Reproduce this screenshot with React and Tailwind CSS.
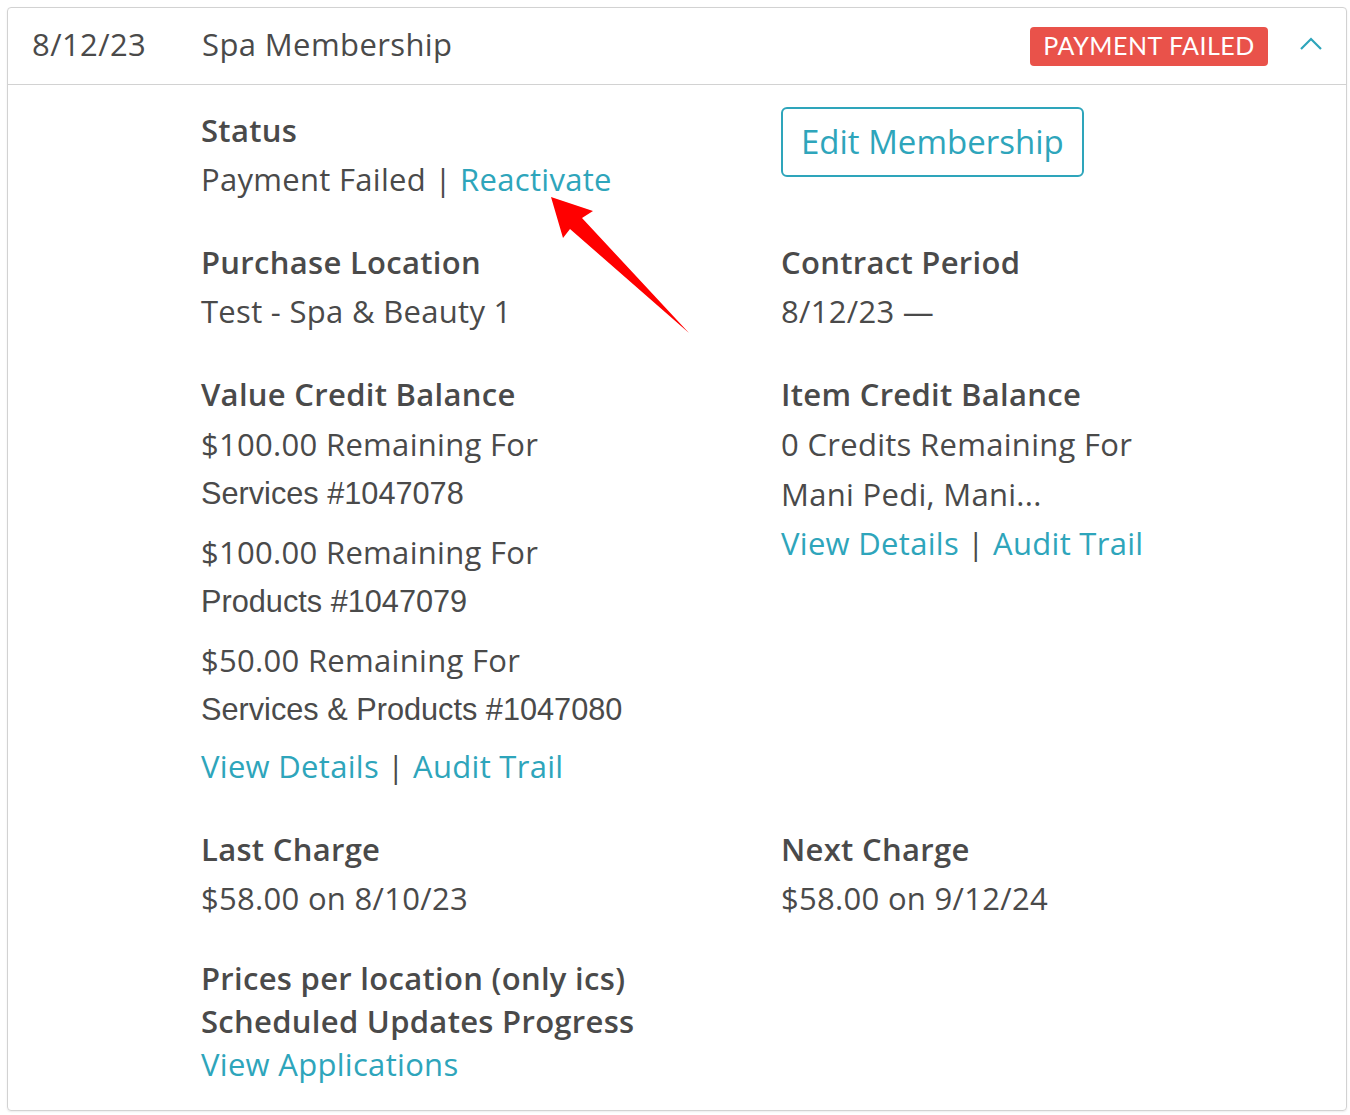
import React from "react";

const teal = "text-[#2ea5bb]";

function Field({ label, children, className = "" }) {
  return (
    <div className={className}>
      <div className="font-semibold leading-[49px]">{label}</div>
      {children}
    </div>
  );
}

function Links() {
  return (
    <div className="leading-[49px]">
      <a className={teal}>View Details</a> | <a className={teal}>Audit Trail</a>
    </div>
  );
}

function Credit({ amount, what }) {
  return (
    <div>
      <div className="leading-[50px]">{amount} Remaining For</div>
      <div className="leading-[50px] font-['Liberation_Sans',Arial,sans-serif] text-[30.7px] tracking-normal">{what}</div>
    </div>
  );
}

export default function App() {
  return (
    <div className="bg-white w-[1350px] h-[1115px] pt-[7px] pl-[7px] font-['Open_Sans',sans-serif] text-[#4a4a4a] relative">
      <div className="w-[1340px] h-[1104px] border border-[#d2d2d2] rounded-[4px] shadow-[0_1px_2px_rgba(0,0,0,0.08)]">
        {/* header */}
        <div className="h-[77px] border-b border-[#d2d2d2] flex items-center pl-6 pr-6 text-[31px] tracking-[0.4px]">
          <div className="w-[170px] pb-[4px]">8/12/23</div>
          <div className="flex-1 pb-[4px]">Spa Membership</div>
          <div className="bg-[#e9524a] text-white font-['Lato',sans-serif] text-[25px] tracking-[0.5px] rounded-[4px] h-[39px] w-[238px] flex items-center justify-center">
            PAYMENT FAILED
          </div>
          <svg className="ml-[32px] mt-[-4px]" width="22" height="14" viewBox="0 0 22 14" fill="none">
            <path d="M1 12 L11 2 L21 12" stroke="#2ea5bb" strokeWidth="2.2" />
          </svg>
        </div>

        {/* body */}
        <div className="pl-[193px] pt-[21px] text-[31px] tracking-[0.3px]">
          <div className="grid grid-cols-[580px_1fr]">
            <Field label="Status">
              <div className="leading-[49px]">
                Payment Failed | <a className={teal}>Reactivate</a>
              </div>
            </Field>
            <div>
              <button className={`mt-[1px] border-2 border-[#2ea5bb] rounded-[6px] h-[70px] px-[18px] text-[33px] tracking-normal ${teal}`}>
                Edit Membership
              </button>
            </div>

            <Field label="Purchase Location" className="mt-[34px]">
              <div className="leading-[49px]">Test - Spa &amp; Beauty 1</div>
            </Field>
            <Field label="Contract Period" className="mt-[34px]">
              <div className="leading-[49px]">8/12/23 —</div>
            </Field>

            <Field label="Value Credit Balance" className="mt-[34px]">
              <div className="flex flex-col gap-2">
                <Credit amount="$100.00" what="Services #1047078" />
                <Credit amount="$100.00" what="Products #1047079" />
                <Credit amount="$50.00" what="Services & Products #1047080" />
              </div>
              <div className="mt-[7px]">
                <Links />
              </div>
            </Field>
            <Field label="Item Credit Balance" className="mt-[34px]">
              <div className="leading-[50px]">0 Credits Remaining For</div>
              <div className="leading-[50px]">Mani Pedi, Mani...</div>
              <Links />
            </Field>

            <Field label="Last Charge" className="mt-[34px]">
              <div className="leading-[49px]">$58.00 on 8/10/23</div>
            </Field>
            <Field label="Next Charge" className="mt-[34px]">
              <div className="leading-[49px]">$58.00 on 9/12/24</div>
            </Field>

            <div className="mt-[34px] leading-[43px]">
              <div className="font-semibold">Prices per location (only ics)</div>
              <div className="font-semibold">Scheduled Updates Progress</div>
              <a className={teal}>View Applications</a>
            </div>
          </div>
        </div>
      </div>

      {/* annotation arrow */}
      <svg className="absolute left-0 top-0 pointer-events-none" width="1350" height="1115">
        <polygon points="551,197 593,211 582,218 689,333 570,229 563,238" fill="#ff0000" />
      </svg>
    </div>
  );
}
